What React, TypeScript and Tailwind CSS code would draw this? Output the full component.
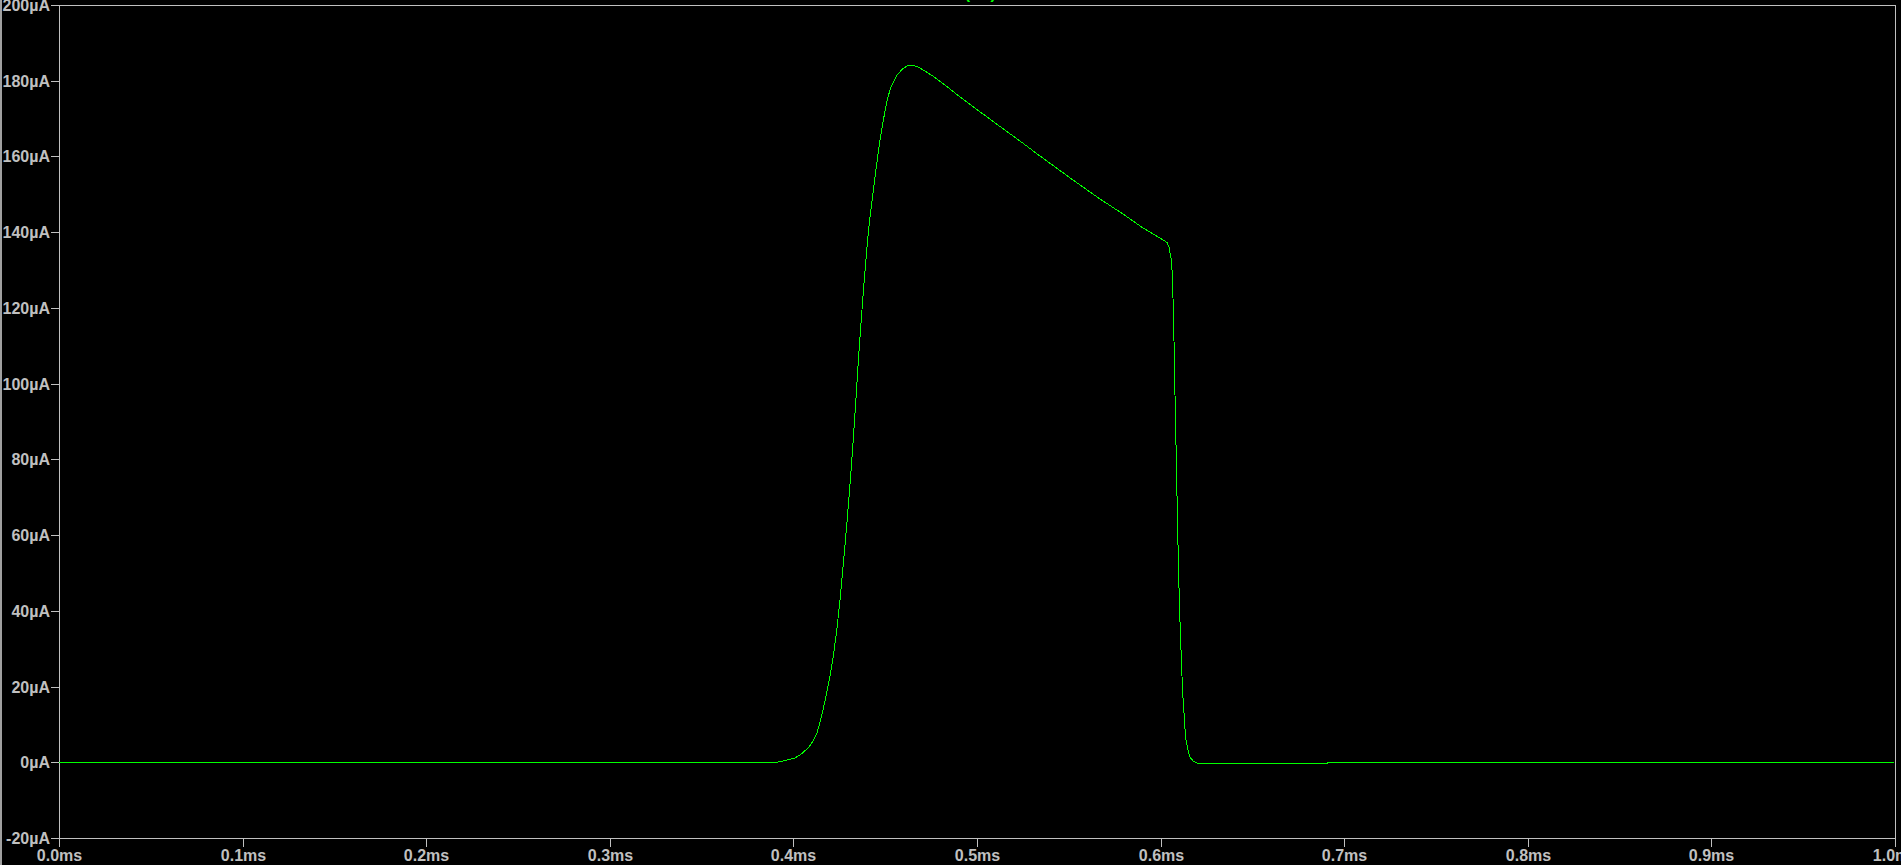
const PLOT = { left: 59, right: 1895, top: 5, bottom: 838 };

const yLabels = ["200µA", "180µA", "160µA", "140µA", "120µA", "100µA", "80µA", "60µA", "40µA", "20µA", "0µA", "-20µA"];
const xLabels = ["0.0ms", "0.1ms", "0.2ms", "0.3ms", "0.4ms", "0.5ms", "0.6ms", "0.7ms", "0.8ms", "0.9ms", "1.0ms"];

const yTick = (i: number) => Math.round(PLOT.top + (i * (PLOT.bottom - PLOT.top)) / 11) + 0.5;
const xTick = (i: number) => Math.round(PLOT.left + (i * (PLOT.right - PLOT.left)) / 10) + 0.5;

// trace traced off the reference, page pixels
const trace = [
  [59, 762.5], [776, 762.5], [783, 761], [795, 758], [802, 753.5], [809, 747], [813, 741], [817, 733], [820, 722],
  [823, 710], [826, 696], [829.5, 679], [833.5, 655], [837, 628], [840, 600], [843.5, 562],
  [847, 522], [850.5, 478], [853.5, 436], [856, 398], [858.5, 358], [860.5, 330],
  [862.5, 303], [864.5, 277], [866.5, 253], [868.5, 231], [870.5, 213], [872.5, 197], [875.5, 173],
  [879.5, 143], [883, 122], [886.5, 103], [890.5, 88], [897, 75], [903, 68.5], [907, 66], [913, 65.5],
  [918, 67], [925, 71], [935, 77.5], [943, 83.5], [962, 98.5], [983, 114], [1000, 126.5], [1020, 141], [1040, 156],
  [1073, 180], [1100, 199], [1123, 214], [1143, 228], [1160, 238], [1167, 242.5], [1169, 247], [1171, 258], [1172, 270], [1173.5, 312],
  [1174.5, 370], [1175.5, 419], [1176.5, 469], [1177.5, 521], [1178.5, 567], [1179.5, 607], [1180.5, 637],
  [1181.5, 662], [1182.5, 690], [1184.5, 720], [1185.5, 737], [1188, 750], [1190, 757], [1193, 761],
  [1198, 763.5], [1327, 763.5], [1328, 762.5], [1894, 762.5],
];

export default function App() {
  return (
    <div className="flex h-screen w-full overflow-hidden border-l-2 border-[#a0a0a0] bg-black">
      <svg
        width={1899}
        height={865}
        viewBox="2 0 1899 865"
        className="block shrink-0 font-['Liberation_Sans',Arial,sans-serif] text-[16px] font-bold"
      >
        <text x={978} y={-1.5} textAnchor="middle" className="fill-[#00ff00]">
          I(R1)
        </text>

        <path
          d={`M${PLOT.left + 0.5} ${PLOT.top + 0.5}H${PLOT.right + 0.5}V${PLOT.bottom + 0.5}H${PLOT.left + 0.5}Z`}
          fill="none"
          shapeRendering="crispEdges"
          className="stroke-[#c0c0c0]"
        />

        {yLabels.map((label, i) => (
          <g key={label}>
            <line x1={51} x2={59} y1={yTick(i)} y2={yTick(i)} shapeRendering="crispEdges" className="stroke-[#c0c0c0]" />
            <text x={50} y={yTick(i) + 5.5} textAnchor="end" className="fill-[#c0c0c0]">
              {label}
            </text>
          </g>
        ))}

        {xLabels.map((label, i) => (
          <g key={label}>
            <line x1={xTick(i)} x2={xTick(i)} y1={839} y2={847} shapeRendering="crispEdges" className="stroke-[#c0c0c0]" />
            <text x={xTick(i)} y={861} textAnchor="middle" className="fill-[#c0c0c0]">
              {label}
            </text>
          </g>
        ))}

        <polyline
          points={trace.map((p) => p.join(",")).join(" ")}
          fill="none"
          shapeRendering="crispEdges"
          className="stroke-[#00ff00]"
        />
      </svg>
    </div>
  );
}
